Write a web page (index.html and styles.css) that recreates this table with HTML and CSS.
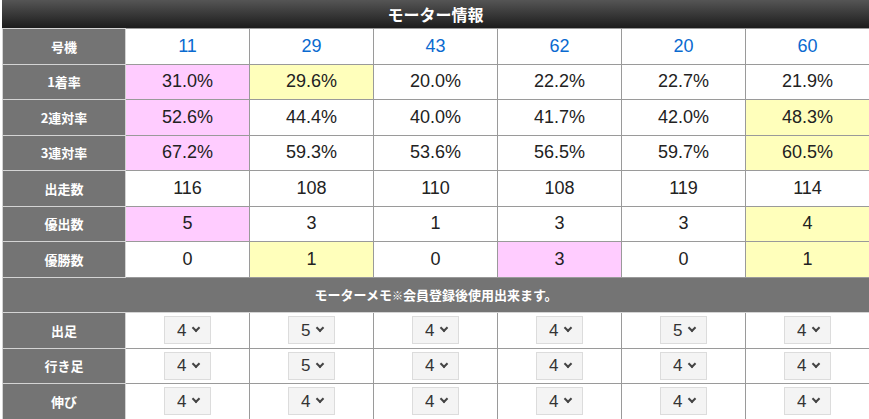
FILE: index.html
```html
<!DOCTYPE html>
<html lang="ja">
<head>
<meta charset="utf-8">
<title>モーター情報</title>
<link rel="stylesheet" href="styles.css">
</head>
<body>
<div class="wrap">
  <div class="title">モーター情報</div>
  <table class="motor">
    <colgroup><col class="c-label"><col class="c-data"><col class="c-data"><col class="c-data"><col class="c-data"><col class="c-data"><col class="c-data"></colgroup>
    <tbody>
      <tr><th>号機</th><td class="no">11</td><td class="no">29</td><td class="no">43</td><td class="no">62</td><td class="no">20</td><td class="no">60</td></tr>
      <tr><th>1着率</th><td class="pink">31.0%</td><td class="yellow">29.6%</td><td>20.0%</td><td>22.2%</td><td>22.7%</td><td>21.9%</td></tr>
      <tr><th>2連対率</th><td class="pink">52.6%</td><td>44.4%</td><td>40.0%</td><td>41.7%</td><td>42.0%</td><td class="yellow">48.3%</td></tr>
      <tr><th>3連対率</th><td class="pink">67.2%</td><td>59.3%</td><td>53.6%</td><td>56.5%</td><td>59.7%</td><td class="yellow">60.5%</td></tr>
      <tr><th>出走数</th><td>116</td><td>108</td><td>110</td><td>108</td><td>119</td><td>114</td></tr>
      <tr><th>優出数</th><td class="pink">5</td><td>3</td><td>1</td><td>3</td><td>3</td><td class="yellow">4</td></tr>
      <tr><th>優勝数</th><td>0</td><td class="yellow">1</td><td>0</td><td class="pink">3</td><td>0</td><td class="yellow">1</td></tr>
      <tr><th colspan="7" class="memo">モーターメモ<span class="note">※</span>会員登録後使用出来ます。</th></tr>
      <tr><th>出足</th>
        <td><span class="sel"><select><option>4</option></select></span></td>
        <td><span class="sel"><select><option>5</option></select></span></td>
        <td><span class="sel"><select><option>4</option></select></span></td>
        <td><span class="sel"><select><option>4</option></select></span></td>
        <td><span class="sel"><select><option>5</option></select></span></td>
        <td><span class="sel"><select><option>4</option></select></span></td></tr>
      <tr><th>行き足</th>
        <td><span class="sel"><select><option>4</option></select></span></td>
        <td><span class="sel"><select><option>5</option></select></span></td>
        <td><span class="sel"><select><option>4</option></select></span></td>
        <td><span class="sel"><select><option>4</option></select></span></td>
        <td><span class="sel"><select><option>4</option></select></span></td>
        <td><span class="sel"><select><option>4</option></select></span></td></tr>
      <tr><th>伸び</th>
        <td><span class="sel"><select><option>4</option></select></span></td>
        <td><span class="sel"><select><option>4</option></select></span></td>
        <td><span class="sel"><select><option>4</option></select></span></td>
        <td><span class="sel"><select><option>4</option></select></span></td>
        <td><span class="sel"><select><option>4</option></select></span></td>
        <td><span class="sel"><select><option>4</option></select></span></td></tr>
    </tbody>
  </table>
</div>
</body>
</html>
```
FILE: styles.css
```css
html, body {
  margin: 0;
  padding: 0;
  background: #fff;
}
body {
  font-family: "Liberation Sans", "Noto Sans CJK JP", sans-serif;
  color: #222;
}
.wrap {
  padding-left: 2px;
  width: 867px;
}
.title {
  height: 28px;
  line-height: 28px;
  text-align: center;
  color: #fff;
  font-weight: bold;
  font-size: 16px;
  font-family: "Noto Sans CJK JP", sans-serif;
  background: linear-gradient(#555555, #1c1c1c);
}
.motor {
  width: 867px;
  border-collapse: collapse;
  table-layout: fixed;
}
.c-label { width: 123px; }
.c-data { width: 124px; }
.motor th {
  background: #747474;
  color: #fff;
  font-family: "Noto Sans CJK JP", sans-serif;
  font-weight: bold;
  font-size: 13px;
  border: 1px solid #d4d4d4;
  height: 34.5px;
  padding: 0;
  text-align: center;
}
.motor td {
  border: 1px solid #9a9a9a;
  height: 34.5px;
  padding: 0;
  text-align: center;
  font-size: 18px;
  color: #222;
  background: #fff;
}
.motor td.no { color: #0a6ad0; }
.motor td.pink { background: #ffccff; }
.motor td.yellow { background: #ffffbb; }
.motor th.memo {
  border-color: #d4d4d4;
}
.note { font-size: 11px; }
.sel {
  position: relative;
  display: inline-block;
  vertical-align: middle;
}
.sel select {
  -webkit-appearance: none;
  appearance: none;
  width: 47px;
  height: 28px;
  box-sizing: border-box;
  border: 1px solid #dcdcdc;
  border-radius: 0;
  background: #f4f4f4;
  font-family: "Liberation Sans", sans-serif;
  font-size: 17px;
  color: #333;
  padding: 0 0 0 12px;
  margin: 0;
  display: block;
}
.sel::after {
  content: "";
  position: absolute;
  left: 29px;
  top: 9px;
  width: 4px;
  height: 4px;
  border-right: 2px solid #444;
  border-bottom: 2px solid #444;
  transform: rotate(45deg);
  pointer-events: none;
}
```
